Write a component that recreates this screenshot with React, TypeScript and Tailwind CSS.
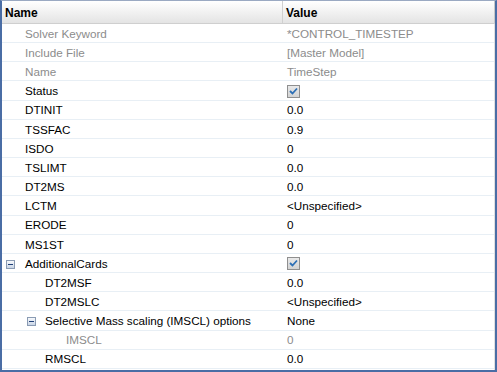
const rows: { name: string; value: string; level: number; gray?: boolean; check?: boolean; expander?: boolean }[] = [
  { name: "Solver Keyword", value: "*CONTROL_TIMESTEP", level: 0, gray: true },
  { name: "Include File", value: "[Master Model]", level: 0, gray: true },
  { name: "Name", value: "TimeStep", level: 0, gray: true },
  { name: "Status", value: "", level: 0, check: true },
  { name: "DTINIT", value: "0.0", level: 0 },
  { name: "TSSFAC", value: "0.9", level: 0 },
  { name: "ISDO", value: "0", level: 0 },
  { name: "TSLIMT", value: "0.0", level: 0 },
  { name: "DT2MS", value: "0.0", level: 0 },
  { name: "LCTM", value: "<Unspecified>", level: 0 },
  { name: "ERODE", value: "0", level: 0 },
  { name: "MS1ST", value: "0", level: 0 },
  { name: "AdditionalCards", value: "", level: 0, check: true, expander: true },
  { name: "DT2MSF", value: "0.0", level: 1 },
  { name: "DT2MSLC", value: "<Unspecified>", level: 1 },
  { name: "Selective Mass scaling (IMSCL) options", value: "None", level: 1, expander: true },
  { name: "IMSCL", value: "0", level: 2, gray: true },
  { name: "RMSCL", value: "0.0", level: 1 },
];

const indents = ["pl-[23px]", "pl-[43px]", "pl-[64px]"];
const expanderPos = ["left-[4px]", "left-[25px]", "left-[45px]"];

function Expander({ level }: { level: number }) {
  return (
    <span
      className={`absolute top-[6px] ${expanderPos[level]} flex h-[9px] w-[9px] items-center justify-center border border-[#8a9bb3] bg-gradient-to-b from-[#f7f9fc] to-[#c9d5e6]`}
    >
      <span className="h-px w-[5px] bg-[#1f3f77]" />
    </span>
  );
}

function CheckBox() {
  return (
    <span className="flex h-[13px] w-[13px] items-center justify-center border border-[#8f8f8f] bg-gradient-to-b from-[#e9e9e9] to-[#d3d3d3]">
      <svg width="9" height="8" viewBox="0 0 9 8">
        <path d="M1 4 L3.5 6.5 L8 1.5" fill="none" stroke="#2d6fb5" strokeWidth="1.8" />
      </svg>
    </span>
  );
}

export default function App() {
  return (
    <div className="h-[372px] w-[497px] overflow-hidden bg-white font-['Liberation_Sans',Arial,sans-serif] text-[11.7px]">
      <div className="flex h-full flex-col border-x-2 border-b-2 border-[#4a6da5] border-t border-t-[#9aa9c2]">
        <div className="flex h-[23px] shrink-0 border-b border-[#cfcfcf] bg-gradient-to-b from-white to-[#e4e4e4] text-[12px] font-bold text-black">
          <div className="flex w-[281px] items-center border-r border-[#d0d0d0] pl-[3px] pt-[2px]">Name</div>
          <div className="flex flex-1 items-center border-r border-[#c8c8c8] pl-[3px] pt-[2px]">Value</div>
        </div>
        <div className="flex-1 border-r border-[#e0e0e0]">
          {rows.map((r) => (
            <div key={r.name} className="relative flex h-[19.17px] items-center border-b border-[#e8eff5] pt-[1px]">
              {r.expander && <Expander level={r.level} />}
              <div className={`w-[282px] ${indents[r.level]} ${r.gray ? "text-[#8c8c8c]" : "text-black"}`}>{r.name}</div>
              <div className={`flex-1 pl-[3px] ${r.gray ? "text-[#8c8c8c]" : "text-black"}`}>
                {r.check ? <CheckBox /> : r.value}
              </div>
            </div>
          ))}
        </div>
      </div>
    </div>
  );
}
